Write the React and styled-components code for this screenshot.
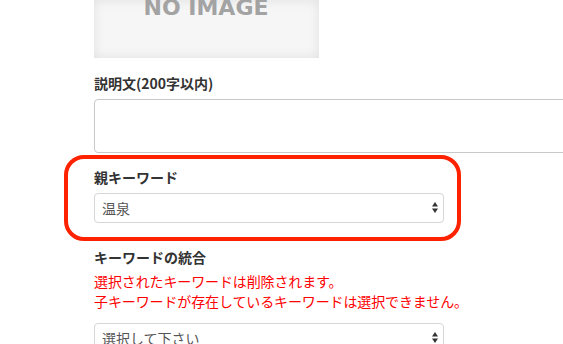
import React from "react";
import styled, { createGlobalStyle } from "styled-components";

const Global = createGlobalStyle`
  html, body { margin: 0; padding: 0; background: #fff; overflow: hidden; }
  body { font-family: "Noto Sans CJK JP", "Noto Sans", sans-serif; }
`;

const Page = styled.div`
  width: 563px;
  height: 344px;
  overflow: hidden;
  padding-left: 94px;
  box-sizing: border-box;
`;

const ImageBox = styled.div`
  width: 225px;
  height: 58px;
  background: #f6f6f6;
  box-shadow: inset 0 0 12px rgba(0, 0, 0, 0.09);
  overflow: hidden;
  display: flex;
  justify-content: center;
`;

const NoImageText = styled.div`
  margin-top: -3px;
  margin-left: -1px;
  font-family: "DejaVu Sans", "Liberation Sans", sans-serif;
  font-weight: 700;
  font-size: 22px;
  line-height: 22px;
  color: #a3a3a3;
  white-space: nowrap;
`;

const Label = styled.div`
  font-size: 14px;
  line-height: 20px;
  font-weight: 700;
  color: #333;
  margin-top: ${(p) => p.$top}px;
`;

const TextArea = styled.textarea`
  display: block;
  margin-top: 6px;
  width: 520px;
  height: 54px;
  box-sizing: border-box;
  border: 1px solid #c8c8c8;
  border-radius: 4px;
  resize: none;
  outline: none;
  background: #fff;
`;

const Group = styled.div`
  position: relative;
  padding-top: 14px;
`;

const Highlight = styled.div`
  position: absolute;
  top: 2px;
  left: -30px;
  width: 397px;
  height: 86px;
  box-sizing: border-box;
  border: 4.5px solid #ff2200;
  border-radius: 20px;
  pointer-events: none;
`;

const SelectWrap = styled.div`
  position: relative;
  width: 350px;
  margin-top: ${(p) => p.$top}px;
`;

const Select = styled.select`
  display: block;
  width: 100%;
  height: 30px;
  box-sizing: border-box;
  appearance: none;
  -webkit-appearance: none;
  border: 1px solid #d6d6d6;
  border-radius: 4px;
  background: #fff;
  padding: 0 24px 0 7px;
  font-family: "Noto Sans CJK JP", "Noto Sans", sans-serif;
  font-size: 14px;
  color: #555;
  outline: none;
`;

const Arrow = styled.svg`
  position: absolute;
  right: 5px;
  top: 8px;
  width: 8px;
  height: 13px;
  pointer-events: none;
`;

const Notice = styled.div`
  margin-top: 4px;
  font-size: 14px;
  line-height: 20px;
  color: #ff0000;
  letter-spacing: -0.12px;
`;

const Arrows = () => (
  <Arrow viewBox="0 0 8 13">
    <path d="M4 1 L7 5.5 L1 5.5 Z" fill="#333" />
    <path d="M4 12 L7 7.5 L1 7.5 Z" fill="#333" />
  </Arrow>
);

export default function App() {
  return (
    <>
      <Global />
      <Page>
        <ImageBox>
          <NoImageText>NO IMAGE</NoImageText>
        </ImageBox>
        <Label $top={15}>説明文(200字以内)</Label>
        <TextArea />
        <Group>
          <Highlight />
          <Label $top={0}>親キーワード</Label>
          <SelectWrap $top={6}>
            <Select defaultValue="onsen">
              <option value="onsen">温泉</option>
            </Select>
            <Arrows />
          </SelectWrap>
        </Group>
        <Label $top={24}>キーワードの統合</Label>
        <Notice>
          選択されたキーワードは削除されます。
          <br />
          子キーワードが存在しているキーワードは選択できません。
        </Notice>
        <SelectWrap $top={12}>
          <Select defaultValue="">
            <option value="">選択して下さい</option>
          </Select>
          <Arrows />
        </SelectWrap>
      </Page>
    </>
  );
}
